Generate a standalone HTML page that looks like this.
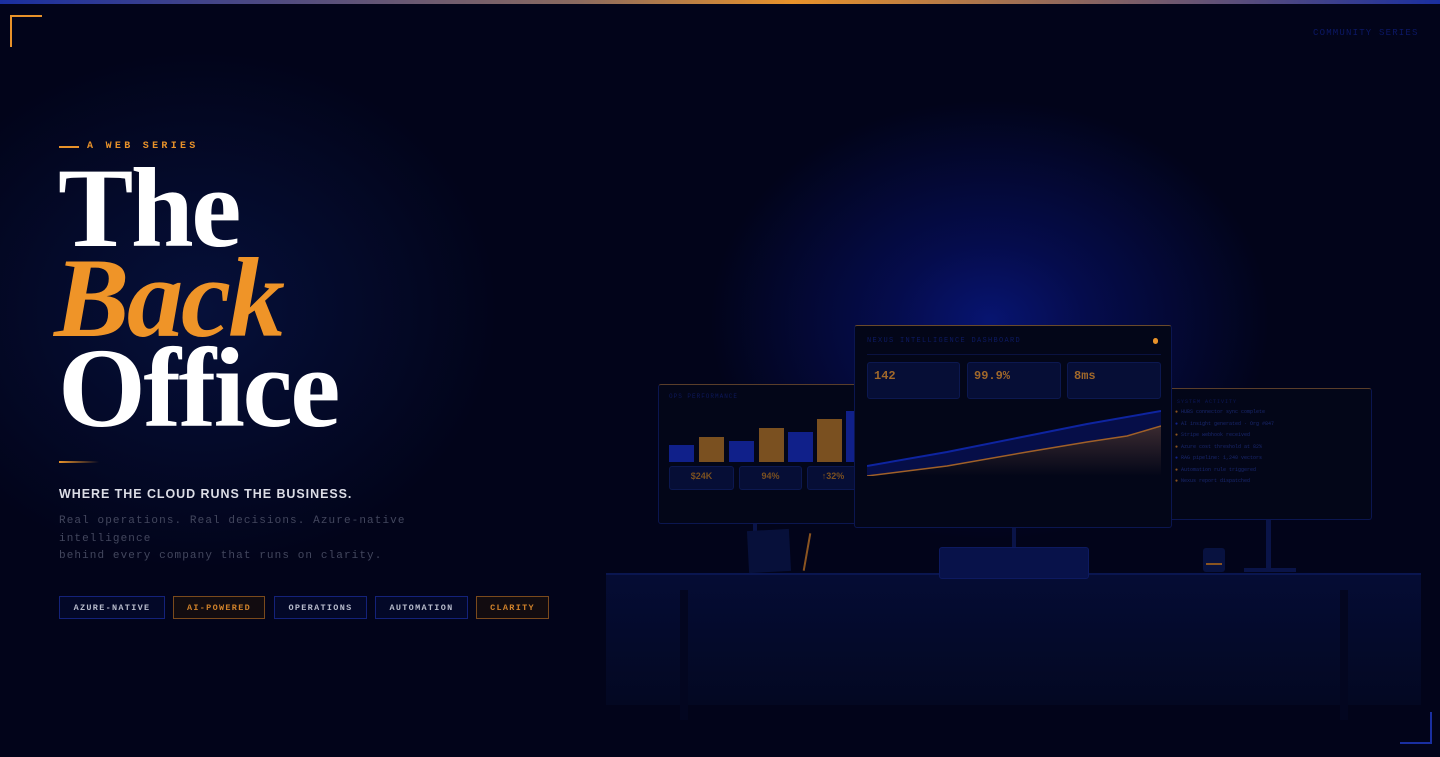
<!DOCTYPE html>
<html><head><meta charset="utf-8"><style>
*{margin:0;padding:0;box-sizing:border-box}
body{width:1440px;height:757px;overflow:hidden;background:#02041a;position:relative;font-family:"Liberation Sans",sans-serif}
.bg{position:absolute;inset:0;background:radial-gradient(ellipse 280px 220px at 990px 320px,#071470 0%,#050c4c 35%,rgba(3,6,40,0) 100%),radial-gradient(ellipse 300px 260px at 200px 310px,#06103a 0%,rgba(2,4,26,0) 100%)}
.top{position:absolute;left:0;top:0;width:1440px;height:4px;background:linear-gradient(90deg,#1a2fa0,#8a6a60 40%,#e8922a 55%,#1a2fa0 100%)}
.abs{position:absolute}
.mono{font-family:"Liberation Mono",monospace}
.tag{position:absolute;top:596px;height:23px;border:1px solid #14227a;background:#030828;color:#b8bccc;font:bold 8.5px "Liberation Mono",monospace;letter-spacing:1.3px;display:flex;align-items:center;justify-content:center}
.tag.o{border-color:#7a4a1c;background:#120c10;color:#d0822a}
.scr{position:absolute;background:#030618;border:1px solid #0b1650;border-radius:3px}
.k{position:absolute;background:#060e36;border:1px solid #0c1850;border-radius:3px}
</style></head><body>
<div class="bg"></div>
<div class="top"></div>
<div class="abs" style="left:10px;top:15px;width:32px;height:32px;border-left:2px solid #e8922a;border-top:2px solid #e8922a"></div>
<div class="abs" style="left:1400px;top:712px;width:32px;height:32px;border-right:2px solid #1a2fa0;border-bottom:2px solid #1a2fa0"></div>
<div class="abs mono" style="left:1313px;top:28px;font-size:9px;letter-spacing:1.2px;color:#0c1866">COMMUNITY SERIES</div>

<div class="abs" style="left:59px;top:146px;width:20px;height:2px;background:#e8922a"></div>
<div class="abs mono" style="left:87px;top:141px;font-size:10px;font-weight:bold;letter-spacing:3.3px;color:#e8922a">A WEB SERIES</div>
<div class="abs" style="left:58px;top:164px;font-family:'Liberation Serif',serif;font-weight:bold;font-size:113px;line-height:90px;color:#fff;letter-spacing:-2.5px">
<div>The</div>
<div style="color:#ef9428;font-style:italic;margin-left:-4px">Back</div>
<div>Office</div>
</div>
<div class="abs" style="left:59px;top:461px;width:40px;height:2px;background:linear-gradient(90deg,#e8922a,rgba(232,146,42,0))"></div>
<div class="abs" style="left:59px;top:486px;font-size:13px;font-weight:bold;letter-spacing:1px;color:#dcdde6;transform:scaleX(0.96);transform-origin:left">WHERE THE CLOUD RUNS THE BUSINESS.</div>
<div class="abs mono" style="left:59px;top:513px;font-size:11px;line-height:17.5px;letter-spacing:1.1px;color:#43475e;width:380px">Real operations. Real decisions. Azure-native<br>intelligence<br>behind every company that runs on clarity.</div>

<div class="tag" style="left:59px;width:106px">AZURE-NATIVE</div>
<div class="tag o" style="left:173px;width:92px">AI-POWERED</div>
<div class="tag" style="left:274px;width:93px">OPERATIONS</div>
<div class="tag" style="left:375px;width:93px">AUTOMATION</div>
<div class="tag o" style="left:476px;width:73px">CLARITY</div>

<!-- desk -->
<div class="abs" style="left:606px;top:573px;width:815px;height:132px;background:linear-gradient(#050c34,#030822);border-top:2px solid #0a1650"></div>
<div class="abs" style="left:680px;top:590px;width:8px;height:130px;background:#030620"></div>
<div class="abs" style="left:1340px;top:590px;width:8px;height:130px;background:#030620"></div>

<!-- left monitor -->
<div class="scr" style="left:658px;top:384px;width:200px;height:140px;border-top:1px solid #5a3e2a">
<div class="abs mono" style="left:10px;top:8px;font-size:6px;color:#0d185a;letter-spacing:1px">OPS PERFORMANCE</div>
<div class="abs" style="left:10px;top:60px;width:25px;height:17px;background:#10208a"></div>
<div class="abs" style="left:40px;top:52px;width:25px;height:25px;background:#7a5020"></div>
<div class="abs" style="left:70px;top:56px;width:25px;height:21px;background:#10208a"></div>
<div class="abs" style="left:100px;top:43px;width:25px;height:34px;background:#7a5020"></div>
<div class="abs" style="left:129px;top:47px;width:25px;height:30px;background:#10208a"></div>
<div class="abs" style="left:158px;top:34px;width:25px;height:43px;background:#7a5020"></div>
<div class="abs" style="left:187px;top:26px;width:12px;height:51px;background:#10208a"></div>
<div class="k" style="left:10px;top:81px;width:65px;height:24px;color:#7a5020;font-size:9px;font-weight:bold;text-align:center;padding-top:4px">$24K</div>
<div class="k" style="left:80px;top:81px;width:63px;height:24px;color:#7a5020;font-size:9px;font-weight:bold;text-align:center;padding-top:4px">94%</div>
<div class="k" style="left:148px;top:81px;width:52px;height:24px;color:#7a5020;font-size:9px;font-weight:bold;text-align:center;padding-top:4px">↑32%</div>
</div>
<div class="abs" style="left:753px;top:524px;width:4px;height:10px;background:#0a1448"></div>
<div class="abs" style="left:748px;top:530px;width:42px;height:42px;background:#07103a;transform:rotate(-3deg)"></div>
<div class="abs" style="left:806px;top:533px;width:2px;height:38px;background:#8a5420;transform:rotate(10deg)"></div>

<!-- right monitor -->
<div class="scr" style="left:1168px;top:388px;width:204px;height:132px;border-top:1px solid #5a3e2a">
<div class="abs mono" style="left:8px;top:10px;font-size:5px;color:#0d185a;letter-spacing:1px">SYSTEM ACTIVITY</div>
<div class="abs mono" style="left:6px;top:18px;font-size:5px;line-height:11.5px;color:#1a2870">
<span style="color:#8a5420">●</span> HUBS connector sync complete<br><span style="color:#12238a">●</span> AI insight generated · Org #847<br><span style="color:#8a5420">●</span> Stripe webhook received<br><span style="color:#8a5420">●</span> Azure cost threshold at 82%<br><span style="color:#12238a">●</span> RAG pipeline: 1,240 vectors<br><span style="color:#8a5420">●</span> Automation rule triggered<br><span style="color:#8a5420">●</span> Nexus report dispatched</div>
</div>
<div class="abs" style="left:1266px;top:520px;width:5px;height:50px;background:#0a1448"></div>
<div class="abs" style="left:1244px;top:568px;width:52px;height:4px;background:#0a1448"></div>
<div class="abs" style="left:1203px;top:548px;width:22px;height:24px;background:#081240;border-radius:3px"></div>
<div class="abs" style="left:1206px;top:563px;width:16px;height:2px;background:#8a5420"></div>

<!-- center monitor -->
<div class="scr" style="left:854px;top:325px;width:318px;height:203px;border-top:1px solid #6a4a2a">
<div class="abs mono" style="left:12px;top:11px;font-size:7px;letter-spacing:1.3px;color:#0d1a62">NEXUS INTELLIGENCE DASHBOARD</div>
<div class="abs" style="left:298px;top:12px;width:5px;height:6px;border-radius:3px;background:#e8922a"></div>
<div class="abs" style="left:12px;top:28px;width:294px;height:1px;background:#0a1240"></div>
<div class="k" style="left:12px;top:36px;width:93px;height:37px"><div style="color:#a0682a;font:bold 12px 'Liberation Mono',monospace;margin:6px 0 0 6px">142</div></div>
<div class="k" style="left:112px;top:36px;width:94px;height:37px"><div style="color:#a0682a;font:bold 12px 'Liberation Mono',monospace;margin:6px 0 0 6px">99.9%</div></div>
<div class="k" style="left:212px;top:36px;width:94px;height:37px"><div style="color:#a0682a;font:bold 12px 'Liberation Mono',monospace;margin:6px 0 0 6px">8ms</div></div>
<svg class="abs" style="left:12px;top:80px" width="294" height="70" viewBox="0 0 294 70">
<defs><linearGradient id="g" x1="0" y1="0" x2="0" y2="1"><stop offset="0" stop-color="#3a2a30"/><stop offset="1" stop-color="#030618"/></linearGradient></defs>
<path d="M0 60 L80 46 L160 30 L220 18 L294 5 L294 70 L0 70Z" fill="#060e48"/>
<path d="M0 70 L80 60 L160 46 L220 36 L260 30 L294 20 L294 70Z" fill="url(#g)"/>
<path d="M0 60 L80 46 L160 30 L220 18 L294 5" stroke="#0e24a0" stroke-width="2" fill="none"/>
<path d="M0 70 L80 60 L160 46 L220 36 L260 30 L294 20" stroke="#a06028" stroke-width="1.5" fill="none"/>
</svg>
</div>
<div class="abs" style="left:1012px;top:528px;width:4px;height:20px;background:#0a1448"></div>
<div class="abs" style="left:939px;top:547px;width:150px;height:32px;background:#08124a;border-radius:3px;border:1px solid #0d1a60"></div>
</body></html>
